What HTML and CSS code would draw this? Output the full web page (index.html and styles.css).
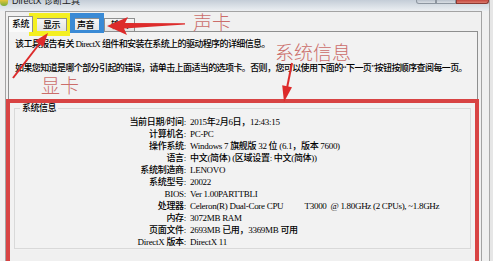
FILE: index.html
```html
<!DOCTYPE html>
<html lang="zh-CN">
<head>
<meta charset="utf-8">
<title>DirectX 诊断工具</title>
<link rel="stylesheet" href="styles.css">
</head>
<body>
<div class="window">
  <div class="titlebar">
    <span class="app-icon"></span>
    <span class="title">DirectX 诊断工具</span>
    <div class="controls"><span class="btn"></span><span class="btn"></span><span class="btn close"></span></div>
  </div>
  <div class="client">
    <div class="tabs">
      <span class="tab active">系统</span>
      <span class="tab">显示</span>
      <span class="tab">声音</span>
      <span class="tab">输入</span>
    </div>
    <div class="panel">
      <p class="intro">该工具报告有关 DirectX 组件和安装在系统上的驱动程序的详细信息。</p>
      <p class="intro">如果您知道是哪个部分引起的错误，请单击上面适当的选项卡。否则，您可以使用下面的“下一页”按钮按顺序查阅每一页。</p>
      <fieldset class="group">
        <legend>系统信息</legend>
        <dl class="info">
          <dt>当前日期/时间:</dt><dd>2015年2月6日，12:43:15</dd>
          <dt>计算机名:</dt><dd>PC-PC</dd>
          <dt>操作系统:</dt><dd>Windows 7 旗舰版 32 位 (6.1，版本 7600)</dd>
          <dt>语言:</dt><dd>中文(简体) (区域设置: 中文(简体))</dd>
          <dt>系统制造商:</dt><dd>LENOVO</dd>
          <dt>系统型号:</dt><dd>20022</dd>
          <dt>BIOS:</dt><dd>Ver 1.00PARTTBLI</dd>
          <dt>处理器:</dt><dd>Celeron(R) Dual-Core CPU           T3000  @ 1.80GHz (2 CPUs), ~1.8GHz</dd>
          <dt>内存:</dt><dd>3072MB RAM</dd>
          <dt>页面文件:</dt><dd>2693MB 已用，3369MB 可用</dd>
          <dt>DirectX 版本:</dt><dd>DirectX 11</dd>
        </dl>
      </fieldset>
    </div>
  </div>
</div>

<div class="mark mark-yellow"></div>
<div class="mark mark-blue"></div>
<div class="mark mark-red"></div>
<span class="note note-sound">声卡</span>
<span class="note note-video">显卡</span>
<span class="note note-sys">系统信息</span>

<svg class="arrows" width="493" height="261" viewBox="0 0 493 261">
  <polygon fill="#dd2b2b" points="107,26 128,17 125,23 185,23.3 185,24.5 124,28.5 127,35"/>
  <line x1="13" y1="78" x2="40" y2="43" stroke="#dd2b2b" stroke-width="2"/>
  <polygon fill="#dd2b2b" points="48,33 35.4,40.8 43.2,47"/>
  <line x1="292" y1="63" x2="287" y2="88" stroke="#dd2b2b" stroke-width="2"/>
  <polygon fill="#dd2b2b" points="284,102 282.2,85.3 292,87.3"/>
</svg>
</body>
</html>
```

FILE: styles.css
```css
* { box-sizing: border-box; }
html, body { margin: 0; }
body {
  width: 493px;
  height: 261px;
  overflow: hidden;
  position: relative;
  background: #e6e6e6;
  font-family: "Liberation Serif", "Noto Sans CJK SC", serif;
  font-size: 9px;
  font-weight: 500;
  color: #000;
}

.window {
  width: 490px;
  height: 261px;
  background: #f0f0f0;
  border-right: 1px solid #a9a9a9;
}

.titlebar {
  height: 11px;
  display: flex;
  align-items: flex-start;
  background: linear-gradient(#c4cdd7, #dce2e8 60%, #eceff2);
  overflow: hidden;
}
.app-icon {
  width: 8px;
  height: 6px;
  border-radius: 0 0 4px 4px;
  background: linear-gradient(#e6c53a, #76ad3a);
}
.title {
  margin: -4px 0 0 4px;
  font: 9px/11px "Liberation Sans", "Noto Sans CJK SC", sans-serif;
  color: #222;
}
.controls { margin-left: auto; display: flex; }
.btn {
  width: 20px;
  height: 4px;
  background: linear-gradient(#b8c1cb, #d9dee4);
  border: 1px solid #8d96a0;
  border-top: 0;
}
.btn:first-child { border-radius: 0 0 0 3px; }
.btn.close {
  width: 33px;
  background: linear-gradient(#c4463c, #da7a6e);
  border-color: #8a3a33;
  border-radius: 0 0 3px 0;
}

.client {
  margin-left: 5px;
  width: 477px;
  height: 250px;
  border: 1px solid #a3a3a3;
  border-bottom: 0;
  padding: 4px 3px 0 2px;
}

.tabs {
  display: flex;
  align-items: flex-end;
  gap: 3px;
  height: 15px;
}
.tab {
  height: 13px;
  padding: 0 6px;
  line-height: 12px;
  border: 1px solid #8e8f8f;
  border-bottom: 0;
  background: linear-gradient(#f6f6f6, #e2e2e2);
  font-family: "Noto Sans CJK SC", sans-serif;
  letter-spacing: -0.5px;
}
.tab.active {
  position: relative;
  z-index: 1;
  height: 16px;
  padding: 0 3px;
  margin-bottom: -1px;
  line-height: 14px;
  background: #fafafa;
}

.panel {
  height: 219px;
  border: 1px solid #8e8f8f;
  border-bottom: 0;
  background: #f2f2f2;
  padding: 6px 4px 0 6px;
}
.intro {
  margin: 0;
  line-height: 12px;
  letter-spacing: -0.6px;
  white-space: nowrap;
}
.intro + .intro { margin-top: 12px; }

.group {
  margin: 28px 0 0 -1px;
  padding: 0;
  width: 457px;
  min-width: 0;
  border: 1px solid #d9d9d9;
}
.group legend {
  margin-left: 5px;
  padding: 0 2px;
  line-height: 12px;
  letter-spacing: -0.5px;
  font-family: "Noto Sans CJK SC", sans-serif;
}

.info {
  margin: 2px 0 0;
  display: grid;
  grid-template-columns: 171px auto;
  column-gap: 4px;
  line-height: 12px;
  letter-spacing: -0.3px;
}
.info dt { text-align: right; white-space: nowrap; }
.info dd { margin: 0; white-space: pre; }

/* annotation overlays */
.mark { position: absolute; }
.mark-yellow {
  left: 29px; top: 13px; width: 41px; height: 23px;
  border-style: solid;
  border-color: #f4ef21;
  border-width: 5px 3px 5px 8px;
}
.mark-blue {
  left: 70px; top: 13px; width: 34px; height: 20px;
  border-style: solid;
  border-color: #3a8ad5;
  border-width: 5px 5px 3px 5px;
}
.mark-red {
  left: 6px; top: 99px; width: 473px; height: 162px;
  border: 4px solid #d84343;
  border-bottom: 0;
}
.note {
  position: absolute;
  font: 300 19px/1 "Noto Sans CJK SC", sans-serif;
  color: #cb6d6a;
}
.note-sound { left: 193px; top: 12px; }
.note-video { left: 41px; top: 75px; }
.note-sys { left: 275px; top: 42px; }
.arrows { position: absolute; left: 0; top: 0; }
```
